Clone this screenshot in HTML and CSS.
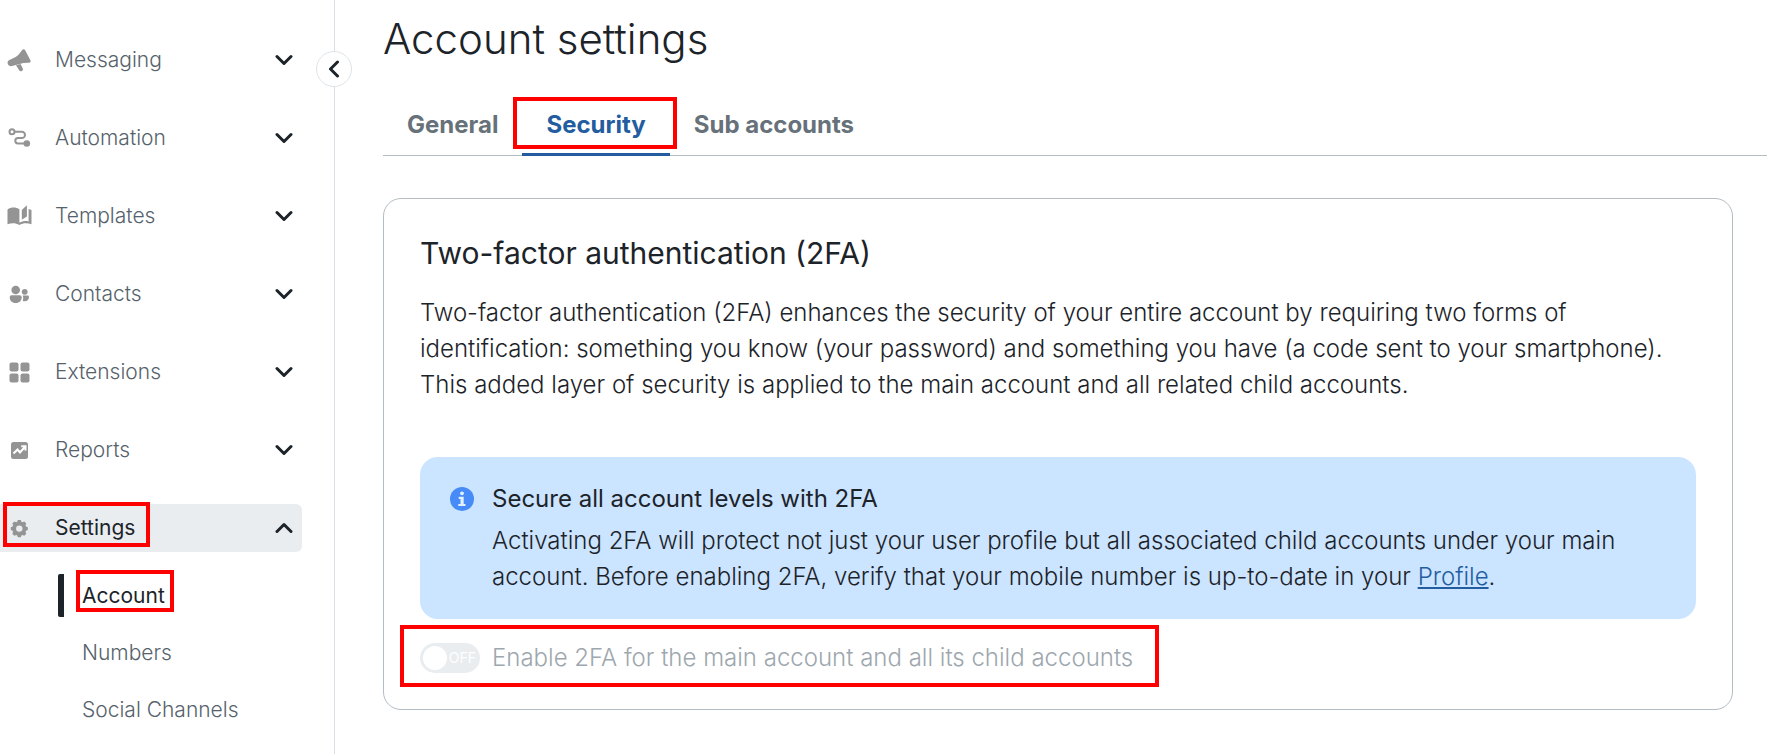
FILE: index.html
```html
<!DOCTYPE html>
<html lang="en">
<head>
    <meta charset="UTF-8">
    <meta name="viewport" content="width=device-width, initial-scale=1.0">
    <title>Account settings</title>
    <link rel="stylesheet" href="styles.css">
</head>
<body>
    <div class="layout">
        <!-- Sidebar -->
        <aside class="sidebar">
            <button type="button" class="collapse" aria-label="Collapse menu">
                <svg class="chevron" viewBox="0 0 18 18"><path d="M12.500 2 5.500 9l7 7"/></svg>
            </button>
            <nav class="menu">
                <button type="button" class="menu-item">
                    <svg class="icon" viewBox="0 0 24 24"><path d="M15 2.200c1-1.200 2.600-1.100 3.300.2l5.100 9.800c.7 1.300 0 2.600-1.500 2.600-3.100 0-5.200.1-7.300.7L5 18c-1.800.5-3.400-.2-4.100-1.700-.8-1.700-.2-3.500 1.500-4.300l6.300-3C11 7.700 13 4.800 15 2.200z"/><path d="m9 17.300 4.500-1.400 2.200 4.300c.6 1.200.2 2.300-.9 2.800-1.100.5-2.200.1-2.800-1z"/></svg>
                    <span class="menu-text">Messaging</span>
                    <svg class="chevron" viewBox="0 0 18 18"><path d="m2 5.500 7 7 7-7"/></svg>
                </button>
                <button type="button" class="menu-item">
                    <svg class="icon" viewBox="0 0 24 24"><g class="line"><circle cx="5" cy="5.700" r="2.500"/><path d="M7.500 5.700h7.300a3.200 3.200 0 0 1 0 6.400H11a2.700 2.700 0 0 0 0 5.400h7"/></g><circle cx="19.800" cy="17.500" r="3.300"/></svg>
                    <span class="menu-text">Automation</span>
                    <svg class="chevron" viewBox="0 0 18 18"><path d="m2 5.500 7 7 7-7"/></svg>
                </button>
                <button type="button" class="menu-item">
                    <svg class="icon" viewBox="0 0 24 24"><path d="M.5 5.500C4 2.900 9 2.900 12.400 5.300v13.400c2.700-1.600 6-2 9.200-1.300V5l2.900.9v14.400c-4-1.500-8.500-1.400-12.100.6-3.700-2-7.700-2.100-11.900-.6z"/><path d="M14.800 6 19.900 1.200v11.200l-5.100 3.400z"/></svg>
                    <span class="menu-text">Templates</span>
                    <svg class="chevron" viewBox="0 0 18 18"><path d="m2 5.500 7 7 7-7"/></svg>
                </button>
                <button type="button" class="menu-item">
                    <svg class="icon" viewBox="0 0 24 24"><circle cx="8.700" cy="8" r="4.300"/><circle cx="17.700" cy="9.800" r="2.900"/><path d="M4.700 13.200h8c1.200 0 2 .8 2 2 0 3.300-2.200 5.800-6 5.800s-6-2.500-6-5.800c0-1.200.8-2 2-2zM15.600 13.600h4.800c1 0 1.600.6 1.600 1.500 0 2.500-1.700 4.200-4.300 4.200-.8 0-1.400-.1-2-.4.7-1.700.8-3.600-.1-5.300z"/></svg>
                    <span class="menu-text">Contacts</span>
                    <svg class="chevron" viewBox="0 0 18 18"><path d="m2 5.500 7 7 7-7"/></svg>
                </button>
                <button type="button" class="menu-item">
                    <svg class="icon" viewBox="0 0 24 24"><rect x="2.500" y="2.500" width="9" height="9" rx="2"/><rect x="13.500" y="2.500" width="9" height="9" rx="2"/><rect x="2.500" y="13.500" width="9" height="9" rx="2"/><rect x="13.500" y="13.500" width="9" height="9" rx="2"/></svg>
                    <span class="menu-text">Extensions</span>
                    <svg class="chevron" viewBox="0 0 18 18"><path d="m2 5.500 7 7 7-7"/></svg>
                </button>
                <button type="button" class="menu-item">
                    <svg class="icon" viewBox="0 0 24 24"><rect x="4" y="4" width="17" height="17" rx="2.500"/><path class="trend" d="m6.500 15.500 4-4 2.500 3 5.300-6M14.300 8.300h4.200v4.200"/></svg>
                    <span class="menu-text">Reports</span>
                    <svg class="chevron" viewBox="0 0 18 18"><path d="m2 5.500 7 7 7-7"/></svg>
                </button>
                <button type="button" class="menu-item open" aria-expanded="true">
                    <svg class="icon" viewBox="0 0 24 24"><path fill-rule="evenodd" d="M10.800 4h3l.6 1.800 1 .4L17.300 5.500l2 2-.8 1.800.5 1.100 1.800.8v2.800l-1.800.8-.5 1.100.8 1.800-2 2-1.900-.8-1 .5-.6 1.800h-3l-.6-1.800-1-.5-1.900.8-2-2 .8-1.800-.5-1.100-1.800-.8v-2.800l1.800-.8.5-1.100L5.300 7.500l2-2 1.900.7 1-.4zM12.300 9.400a3.200 3.200 0 1 0 0 6.400 3.200 3.200 0 0 0 0-6.400z"/></svg>
                    <span class="menu-text">Settings</span>
                    <svg class="chevron" viewBox="0 0 18 18"><path d="m2 12.500 7-7 7 7"/></svg>
                    <span class="mark mark-settings"></span>
                </button>
            </nav>
            <div class="submenu">
                <a href="#" class="active">Account<span class="mark mark-account"></span></a>
                <a href="#">Numbers</a>
                <a href="#">Social Channels</a>
            </div>
        </aside>

        <!-- Content -->
        <main class="content">
            <h1>Account settings</h1>
            <div class="tabs" role="tablist">
                <button type="button" role="tab" class="tab">General</button>
                <button type="button" role="tab" class="tab selected" aria-selected="true">Security<span class="mark mark-security"></span></button>
                <button type="button" role="tab" class="tab">Sub accounts</button>
            </div>

            <section class="card">
                <h2>Two-factor authentication (2FA)</h2>
                <p>Two-factor authentication (2FA) enhances the security of your entire account by requiring two forms of identification: something you know (your password) and something you have (a code sent to your smartphone). This added layer of security is applied to the main account and all related child accounts.</p>

                <div class="notice">
                    <svg class="info" viewBox="0 0 24 24"><circle cx="12" cy="12" r="12"/><circle class="info-mark" cx="12" cy="6.300" r="1.900"/><path class="info-mark" d="M8.700 9.700h5v7.200h1.800v2.200H8.300v-2.200h2.200v-5H8.700z"/></svg>
                    <div class="notice-body">
                        <h3>Secure all account levels with 2FA</h3>
                        <p>Activating 2FA will protect not just your user profile but all associated child accounts under your main account. Before enabling 2FA, verify that your mobile number is up-to-date in your <a href="#">Profile</a>.</p>
                    </div>
                </div>

                <div class="toggle-row">
                    <span class="toggle">
                        <input type="checkbox" id="enable2fa" disabled>
                        <span class="toggle-state">OFF</span>
                    </span>
                    <label for="enable2fa">Enable 2FA for the main account and all its child accounts</label>
                    <span class="mark mark-toggle"></span>
                </div>
            </section>
        </main>
    </div>
</body>
</html>
```
FILE: styles.css
```css
* {
    box-sizing: border-box;
}
body {
    margin: 0;
    background-color: #fff;
    color: #1c2329;
    font-family: Inter, "Liberation Sans", sans-serif;
    font-size: 24px;
    font-weight: 350;
    line-height: 36px;
}
h1, h2, h3, p {
    margin: 0;
}
button {
    border: none;
    background: none;
    font-family: inherit;
    font-weight: inherit;
    color: inherit;
    cursor: pointer;
}
.layout {
    display: flex;
    min-height: 100vh;
}

/* Sidebar */
.sidebar {
    position: relative;
    flex: none;
    width: 335px;
    padding: 36px 32px 24px 0;
    border-right: 1px solid #d9dfe2;
}
.collapse {
    position: absolute;
    top: 51px;
    right: -18px;
    display: flex;
    align-items: center;
    justify-content: center;
    width: 36px;
    height: 36px;
    padding: 0;
    border: 1px solid #dfe4e7;
    border-radius: 50%;
    background-color: #fff;
}
.menu {
    display: flex;
    flex-direction: column;
    gap: 30px;
}
.menu-item {
    position: relative;
    display: flex;
    align-items: center;
    height: 48px;
    padding: 0 9px 0 7px;
    border-radius: 0 6px 6px 0;
    color: #56626b;
    font-size: 21px;
    line-height: 32px;
}
.menu-item.open {
    background-color: #e9edf0;
    color: #1c2329;
    font-weight: 400;
}
.icon {
    width: 24px;
    height: 24px;
    margin-right: 24px;
    overflow: visible;
    fill: #949494;
}
.icon .line {
    fill: none;
    stroke: #949494;
    stroke-width: 2;
}
.icon .trend {
    fill: none;
    stroke: #fff;
    stroke-width: 2;
}
.menu-text {
    flex: 1;
    text-align: left;
}
.chevron {
    width: 18px;
    height: 18px;
    fill: none;
    stroke: #1c2329;
    stroke-width: 3;
    stroke-linecap: round;
    stroke-linejoin: round;
}
.submenu {
    display: flex;
    flex-direction: column;
    align-items: flex-start;
    gap: 14px;
    padding: 22px 0 0 58px;
}
.submenu a {
    position: relative;
    padding-left: 18px;
    border-left: 6px solid transparent;
    border-radius: 2px;
    color: #56626b;
    font-size: 21px;
    line-height: 43px;
    text-decoration: none;
}
.submenu a.active {
    border-left-color: #1c2329;
    color: #1c2329;
    font-weight: 400;
}

/* Content */
.content {
    flex: 1;
    min-width: 0;
    padding: 15px 0 44px 48px;
}
h1 {
    font-size: 42px;
    font-weight: 350;
    line-height: 48px;
}
.tabs {
    display: flex;
    margin-top: 44px;
    border-bottom: 1px solid #b3bdc4;
}
.tab {
    position: relative;
    margin-bottom: -1px;
    padding: 0 24px 10px;
    border-bottom: 3px solid transparent;
    color: #66717a;
    font-size: 24px;
    font-weight: 700;
    line-height: 36px;
}
.tab.selected {
    border-bottom-color: #235d9f;
    color: #235d9f;
}
.card {
    margin: 42px 34px 0 0;
    padding: 36px 36px 33px;
    border: 1px solid #b3bdc4;
    border-radius: 18px;
}
h2 {
    margin-bottom: 24px;
    font-size: 30px;
    font-weight: 400;
}
.notice {
    display: flex;
    gap: 18px;
    margin-top: 54px;
    padding: 24px 30px;
    border-radius: 18px;
    background-color: #cbe4ff;
}
.info {
    flex: none;
    width: 24px;
    height: 24px;
    margin-top: 6px;
    fill: #468bf7;
}
.info-mark {
    fill: #e3f0ff;
}
h3 {
    margin-bottom: 6px;
    font-size: 24px;
    font-weight: 400;
}
.notice a {
    color: #235d9f;
}
.toggle-row {
    position: relative;
    display: flex;
    align-items: center;
    gap: 12px;
    margin-top: 21px;
    color: #9da7ae;
}
.toggle {
    position: relative;
    display: flex;
}
.toggle input {
    appearance: none;
    width: 60px;
    height: 30px;
    margin: 0;
    border-radius: 15px;
    background-color: #e9edf0;
}
.toggle input::before {
    content: "";
    display: block;
    width: 24px;
    height: 24px;
    margin: 3px;
    border-radius: 50%;
    background-color: #fff;
}
.toggle-state {
    position: absolute;
    top: 0;
    right: 4px;
    color: #fff;
    font-size: 14px;
    font-weight: 400;
    line-height: 30px;
}

/* Red highlight frames */
.mark {
    position: absolute;
    border: 4px solid #f00;
    pointer-events: none;
}
.mark-settings {
    top: -2px;
    left: 3px;
    width: 147px;
    height: 45px;
}
.mark-account {
    inset: -4px -9px 5px 12px;
}
.mark-security {
    inset: -10px -7px 4px -9px;
}
.mark-toggle {
    top: -15px;
    left: -20px;
    width: 759px;
    height: 62px;
}
```
